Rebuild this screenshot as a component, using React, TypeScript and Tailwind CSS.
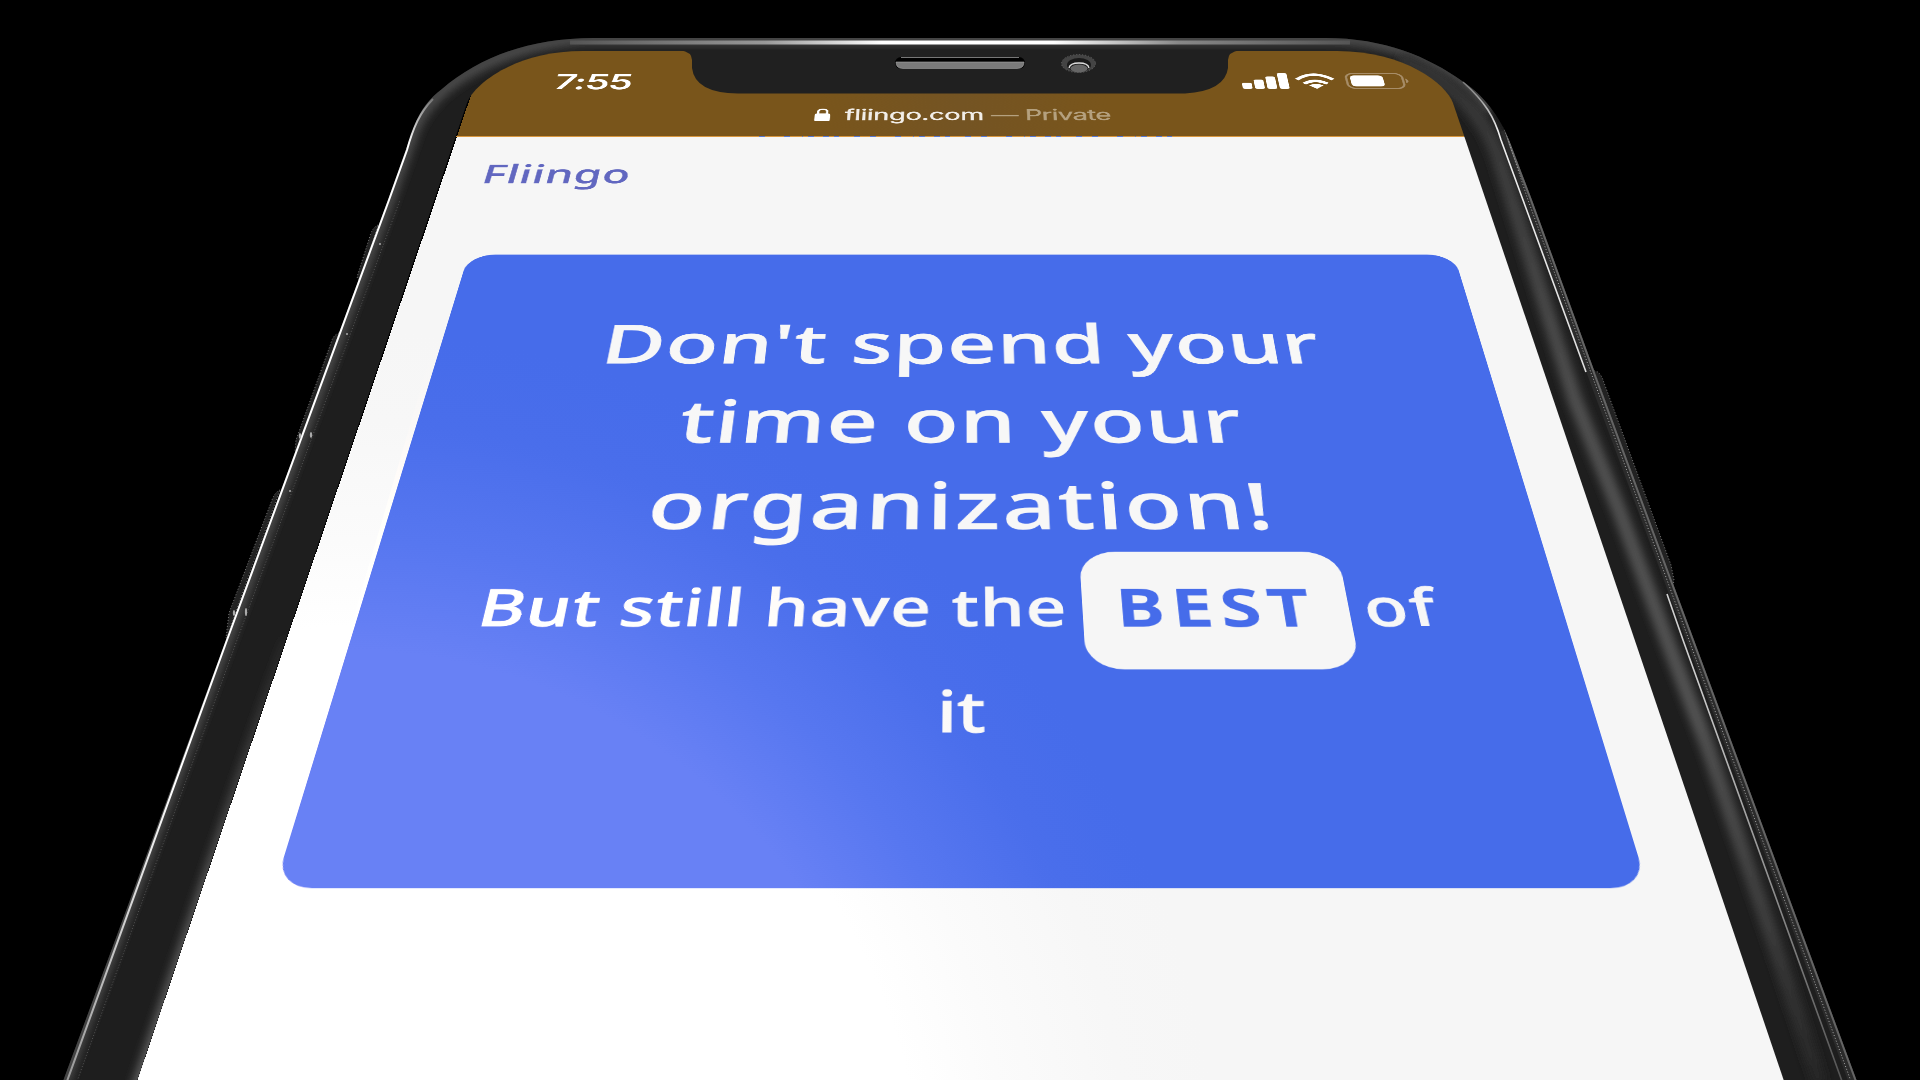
const SCREEN = "M136,1084 L467,103 C474,84 515,51 583,51 L1337,51 C1405,51 1446,84 1453,103 L1785,1084 Z";
const BODY =
  "M62,1084 L226,640 L388,200 L414,127 C420,110 430,98 442,89 C478,58 528,38 594,38 L1325,38 C1385,38 1428,57 1462,81 C1488,98 1503,123 1511,145 L1532,200 L1594,370 L1694,640 L1858,1084 Z";

function StatusIcons() {
  return (
    <svg viewBox="0 0 262 48" className="h-[48px] w-[262px]">
      <g fill="#fff">
        <rect x="0" y="29" width="15" height="18" rx="4" />
        <rect x="19" y="20" width="15" height="27" rx="4" />
        <rect x="38" y="11" width="15" height="36" rx="4" />
        <rect x="57" y="1" width="15" height="46" rx="4" />
        <path d="M114 47 L103 37 Q114 28 125 37 Z" />
      </g>
      <g fill="none" stroke="#fff" strokeWidth="7">
        <path d="M96 32 Q114 16 132 32" />
        <path d="M86 20 Q114 -9 142 20" />
      </g>
      <rect x="163" y="2" width="87" height="44" rx="13" fill="none" stroke="#a78d68" strokeWidth="3.5" />
      <rect x="169" y="8" width="51" height="32" rx="7" fill="#fff" />
      <path d="M254 17 Q262 24 254 31 Z" fill="#a78d68" />
    </svg>
  );
}

function Screen() {
  return (
    <div className="absolute left-0 top-0 flex h-[1860px] w-[1500px] origin-top-left flex-col bg-[#f6f6f6] [transform:matrix3d(0.25,0,0,0,-0.08895,0.1251775,0,-0.000092525,0,0,1,0,191.75,20.122,0,0.39455)]">
      <header className="h-[245px] shrink-0 bg-[linear-gradient(90deg,#79551b_35%,#745423_50%,#79551b_65%)] font-['Inter']">
        <div className="flex items-start justify-between pl-[122px] pr-[55px] pt-[65px]">
          <span className="text-[60px] leading-[52px] font-semibold tracking-[-2px] text-white">7:55</span>
          <StatusIcons />
        </div>
        <div className="mt-[42px] flex h-[52px] items-center pl-[528px] text-[41px] leading-[50px] tracking-[-0.4px]">
          <svg viewBox="0 0 24 38" className="mr-[21px] h-[37px] w-[25px]">
            <rect y="15" width="24" height="22" rx="4" fill="#fff" />
            <path d="M5 17 V10 Q5 3 12 3 Q19 3 19 10 V17" fill="none" stroke="#fff" strokeWidth="3.5" />
          </svg>
          <span className="whitespace-nowrap text-[#f2eee8] [-webkit-text-stroke:0.8px_#f2eee8]">fliingo.com</span>
          <span className="ml-[11px] whitespace-nowrap tracking-[-0.8px] text-[#b5a17f] [-webkit-text-stroke:0.8px_#b5a17f]">— Private</span>
        </div>
      </header>
      <nav className="flex h-[295px] shrink-0 items-start pl-[56px] pt-[69px] font-['Noto_Sans'] text-[65px] leading-[56px] font-medium tracking-[1px] text-[#6167c0] [-webkit-text-stroke:0.6px_#6167c0]">
        Fliingo
      </nav>
      <main className="mx-[71px] h-[1053px] shrink-0 rounded-[37px] bg-[#466cea] pt-[117px] font-['Noto_Sans'] font-medium text-[#f7f7f7] [-webkit-text-stroke:1.2px_#f7f7f7]">
        <h1 className="flex flex-col items-center whitespace-nowrap text-[111px] leading-[153.6px]">
          <span className="tracking-[1.4px]">Don't spend your</span>
          <span className="tracking-[1.8px]">time on your</span>
          <span className="tracking-[3.2px]">organization!</span>
        </h1>
        <p className="mt-[3px] flex h-[183px] items-start pl-[135px] text-[80px] leading-[174px] whitespace-nowrap [-webkit-text-stroke:1px_#f7f7f7]">
          <span className="w-[681px] tracking-[1.3px]">But still have the</span>
          <strong className="mr-[17px] h-[183px] w-[301px] rounded-[42px] bg-[#f6f6f6] pl-[4px] text-center font-semibold tracking-[10px] text-[#466cea] [-webkit-text-stroke:2px_#466cea]">BEST</strong>
          <span className="tracking-[3px]">of</span>
        </p>
        <p className="text-center text-[80px] leading-[116px] [-webkit-text-stroke:1px_#f7f7f7]">it</p>
      </main>
    </div>
  );
}

function Frame() {
  return (
    <svg viewBox="0 0 1920 1080" className="absolute inset-0 h-full w-full">
      <defs>
        <linearGradient id="topEdge" x1="570" x2="1350" y1="0" y2="0" gradientUnits="userSpaceOnUse">
          <stop offset="0" stopColor="#555" />
          <stop offset="0.25" stopColor="#999" />
          <stop offset="0.4" stopColor="#fff" />
          <stop offset="0.62" stopColor="#fff" />
          <stop offset="0.78" stopColor="#888" />
          <stop offset="1" stopColor="#555" />
        </linearGradient>
        <linearGradient id="rightBand" x1="0" x2="0" y1="60" y2="1080" gradientUnits="userSpaceOnUse">
          <stop offset="0" stopColor="#333" />
          <stop offset="0.35" stopColor="#505050" />
          <stop offset="0.65" stopColor="#525252" />
          <stop offset="0.85" stopColor="#3c3c3c" />
          <stop offset="1" stopColor="#262626" />
        </linearGradient>
        <linearGradient id="leftInner" x1="0" x2="0" y1="600" y2="1080" gradientUnits="userSpaceOnUse">
          <stop offset="0" stopColor="#555" stopOpacity="0" />
          <stop offset="0.6" stopColor="#505050" />
          <stop offset="1" stopColor="#5a5a5a" />
        </linearGradient>
        <linearGradient id="leftLine" x1="0" x2="0" y1="95" y2="1080" gradientUnits="userSpaceOnUse">
          <stop offset="0" stopColor="#fff" stopOpacity="0.2" />
          <stop offset="0.05" stopColor="#fff" />
          <stop offset="0.7" stopColor="#fff" />
          <stop offset="1" stopColor="#999" />
        </linearGradient>
        <linearGradient id="rightLine" x1="0" x2="0" y1="80" y2="1080" gradientUnits="userSpaceOnUse">
          <stop offset="0" stopColor="#eee" stopOpacity="0.3" />
          <stop offset="0.05" stopColor="#eee" />
          <stop offset="0.6" stopColor="#ccc" />
          <stop offset="1" stopColor="#555" />
        </linearGradient>
        <clipPath id="body">
          <path d={BODY} />
        </clipPath>
        <filter id="soft" filterUnits="userSpaceOnUse" x="0" y="0" width="1920" height="1100">
          <feGaussianBlur stdDeviation="4" />
        </filter>
        <mask id="rim">
          <rect width="1920" height="1080" fill="#fff" />
          <path d={SCREEN} fill="#000" />
        </mask>
      </defs>
      <g mask="url(#rim)">
        <rect width="1920" height="1080" fill="#000" />
        <g fill="#222" stroke="#777" strokeWidth="1" strokeDasharray="1 2">
          <path d="M378,225 Q372,228 370,236 L357,277 L360,282 Z" />
          <path d="M339,333 Q333,335 331,343 L296,440 L295,452 L299,450 Z" />
          <path d="M280,490 Q275,492 272,500 L229,613 L226,638 Z" />
          <path d="M1594,371 Q1600,371 1603,380 L1671,565 L1674,580 L1673,586 Z" />
        </g>
        <path d={BODY} fill="#1e1e1e" />
        <g clipPath="url(#body)">
          <path d="M62,1084 L388,200 L414,127 C440,70 528,38 594,38 L1325,38 C1400,38 1470,70 1490,110" fill="none" stroke="#484848" strokeWidth="14" filter="url(#soft)" />
          <path d="M1400,58 C1450,80 1480,110 1496,150 L1512,200 L1575,400 L1619,510 L1667,640 L1707,745 L1773,940 L1820,1084" fill="none" stroke="url(#rightBand)" strokeWidth="15" filter="url(#soft)" />
          <path d="M288,640 L137,1090" fill="none" stroke="url(#leftInner)" strokeWidth="14" filter="url(#soft)" />
          <path d="M76,1084 L237,640 L400,200" fill="none" stroke="#555" strokeWidth="1" strokeDasharray="1 2" />
          <path d="M1505,130 L1536,220 L1594,380 L1691,640 L1854,1084" fill="none" stroke="#2b2b2b" strokeWidth="9" />
          <path d="M1500,108 L1511,145 L1532,200 L1594,370 L1694,640 L1858,1084" fill="none" stroke="#646464" strokeWidth="4" />
          <path d="M1505,130 L1528,200 L1590,370 L1689,640 L1852,1084" fill="none" stroke="#aaa" strokeWidth="1" strokeDasharray="1 2" />
        </g>
        <path d="M66,1084 L227,640 L389,200 L407,150 C413,128 420,112 433,99" fill="none" stroke="url(#leftLine)" strokeWidth="2" />
        <path d="M1463,82 C1485,102 1494,116 1501,140 L1523,200 L1586,372 M1667,594 L1683,640 L1843,1084" fill="none" stroke="url(#rightLine)" strokeWidth="1.6" />
        <g fill="#aaa">
          <circle cx="380" cy="244" r="1" />
          <circle cx="347" cy="334" r="1" />
          <ellipse cx="311" cy="435" rx="1.2" ry="3" />
          <ellipse cx="300" cy="436" rx="1.2" ry="3" />
          <circle cx="290" cy="491" r="1" />
          <ellipse cx="246" cy="612" rx="1.1" ry="4" />
          <ellipse cx="234" cy="613" rx="1.2" ry="3" />
        </g>
        <path d="M570,42.5 L1350,42.5" stroke="url(#topEdge)" strokeWidth="4" />
      </g>
      <path d="M680,50 Q692,52 692,60 V68 Q695,93 738,93.5 H1185 Q1225,91 1228,68 V60 Q1228,52 1240,50 Z" fill="#202020" />
      <path d="M456,136.5 H1464" stroke="#d9973f" />
      <path d="M759,136.5 H1183" stroke="#5a78cf" strokeDasharray="6 19 6 12 1 5 6 9 6 5 5 15 6 10" />
      <rect x="895" y="57" width="130" height="12" rx="6" fill="#000" />
      <path d="M901,57.5 H1019" stroke="#777" />
      <path d="M896,62 H1024 Q1024,68.5 1017,68.5 H903 Q896,68.5 896,62 Z" fill="#7b7b7b" stroke="#aaa" strokeWidth="0.6" />
      <ellipse cx="1078.5" cy="63.5" rx="17" ry="9" fill="#444" stroke="#666" strokeDasharray="1 2" />
      <ellipse cx="1079" cy="65" rx="12" ry="7" fill="#1a1a1a" />
      <path d="M1069,68 Q1070,63 1079,63 Q1088,63 1089,68" fill="none" stroke="#ddd" strokeWidth="1.3" />
      <ellipse cx="1079" cy="68.5" rx="8.5" ry="4" fill="#666" />
    </svg>
  );
}

export default function App() {
  return (
    <div className="relative h-[1080px] w-[1920px] overflow-hidden bg-black">
      <Screen />
      <div className="absolute inset-0 mix-blend-plus-lighter bg-[radial-gradient(circle_at_340px_1210px,rgb(10_10_10)_560px,rgb(5_5_5)_670px,rgb(1_1_1)_790px,rgb(0_0_0)_880px)]" />
      <div className="absolute inset-0 mix-blend-plus-lighter bg-[radial-gradient(circle_at_340px_1210px,rgb(24_11_1)_560px,rgb(12_6_1)_670px,rgb(3_1_0)_780px,rgb(0_0_0)_860px)] [clip-path:polygon(460px_254px,1462px_254px,1647px_888px,275px_888px)]" />
      <Frame />
    </div>
  );
}
